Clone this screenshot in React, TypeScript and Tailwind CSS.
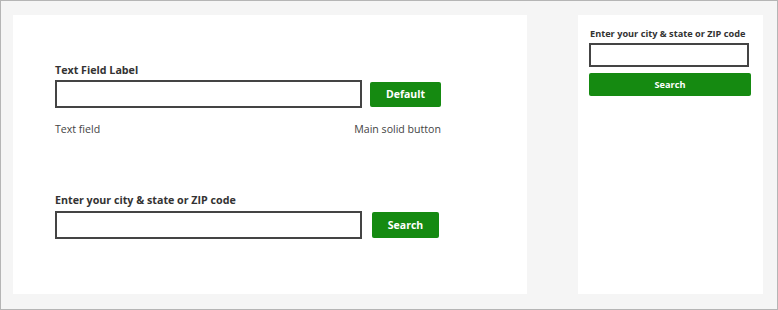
import React from "react";

export default function App() {
  const font = { fontFamily: '"Open Sans", "Noto Sans", sans-serif' };
  return (
    <div
      style={font}
      className="w-[778px] h-[310px] border border-[#b5b5b5] bg-[#f5f5f5] pt-[14px] pl-[12px] flex gap-[51px] text-[#333]"
    >
      <div className="w-[514px] h-[279px] bg-white pl-[42px] pt-[47px]">
        <div className="text-[10.7px] leading-[16px] font-bold text-[#333]">Text Field Label</div>
        <div className="flex items-center mt-[2px]">
          <div className="w-[307px] h-[28px] border-2 border-[#444]" />
          <button className="ml-[8px] w-[71px] h-[25px] bg-[#158a11] rounded-[2px] text-white text-[10.5px] font-bold leading-none">
            Default
          </button>
        </div>
        <div className="w-[386px] flex justify-between mt-[12px] text-[10.6px] leading-[18px] text-[#444]">
          <span>Text field</span>
          <span>Main solid button</span>
        </div>
        <div className="mt-[54px] text-[10.7px] leading-[16px] font-bold text-[#333]">
          Enter your city &amp; state or ZIP code
        </div>
        <div className="flex items-center mt-[3px]">
          <div className="w-[307px] h-[28px] border-2 border-[#444]" />
          <button className="ml-[10px] w-[67px] h-[26px] bg-[#158a11] rounded-[2px] text-white text-[10.5px] font-bold leading-none">
            Search
          </button>
        </div>
      </div>
      <div className="w-[185px] h-[279px] bg-white pl-[11px] pt-[12px]">
        <div className="pl-[1px] text-[9.2px] leading-[14px] font-bold text-[#333] whitespace-nowrap">
          Enter your city &amp; state or ZIP code
        </div>
        <div className="mt-[2px] w-[160px] h-[24px] border-2 border-[#444]" />
        <button className="mt-[6px] w-[162px] h-[23px] bg-[#158a11] rounded-[2px] text-white text-[9.2px] font-bold leading-none">
          Search
        </button>
      </div>
    </div>
  );
}
